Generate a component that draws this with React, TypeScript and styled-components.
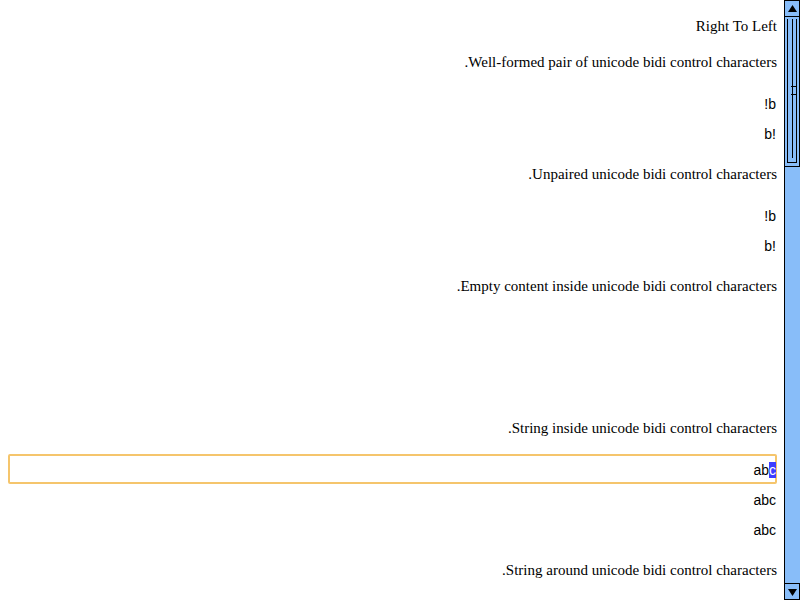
import styled, { createGlobalStyle } from 'styled-components';

const GlobalStyle = createGlobalStyle`
  html, body {
    margin: 0;
    padding: 0;
    height: 100%;
    overflow: hidden;
    background: #fff;
  }
`;

const Page = styled.div`
  display: flex;
  width: 800px;
  height: 600px;
`;

const Content = styled.main`
  flex: 1;
  padding: 18px 7px 0 8px;
  direction: rtl;
  font-family: 'Liberation Serif', 'Times New Roman', serif;
  font-size: 15px;
  color: #000;
  overflow: hidden;
`;

const Title = styled.div`
  line-height: 17px;
  margin-bottom: 19px;
`;

const Caption = styled.p`
  margin: 0 0 17px;
  line-height: 17px;
`;

const Fields = styled.div`
  display: flex;
  flex-direction: column;
  margin-bottom: 18px;
`;

const Field = styled.div<{ $focused?: boolean; $ltr?: boolean }>`
  box-sizing: border-box;
  height: 30px;
  display: flex;
  align-items: center;
  padding: 2px 0 0;
  border: 2px solid ${p => (p.$focused ? '#f5c56c' : 'transparent')};
  border-radius: 2px;
  font-family: 'Liberation Sans', Arial, sans-serif;
  font-size: 14px;
  unicode-bidi: ${p => (p.$ltr ? 'isolate-override' : 'normal')};
  direction: ${p => (p.$ltr ? 'ltr' : 'rtl')};
  justify-content: ${p => (p.$ltr ? 'flex-end' : 'flex-start')};
`;

const FieldText = styled.span`
  margin: 0 -1px;
`;

const Selected = styled.span`
  background: #3d3dff;
  color: #fff;
`;

const Scrollbar = styled.div`
  width: 16px;
  height: 600px;
  display: flex;
  flex-direction: column;
  background: #88bdf9;
`;

const ArrowButton = styled.div`
  box-sizing: border-box;
  height: 17px;
  border: 1px solid #000;
  background: #88bdf9;
  display: flex;
  align-items: center;
  justify-content: center;
`;

const Thumb = styled.div`
  box-sizing: border-box;
  height: 150px;
  border: 1px solid #000;
  border-top: none;
  padding: 2px 2px 3px;
  display: flex;
`;

const ThumbInner = styled.div`
  flex: 1;
  border: 1px solid #000;
  border-top: none;
  display: flex;
  justify-content: center;
  align-items: center;
  position: relative;
`;

const ThumbLine = styled.div`
  width: 1px;
  height: calc(100% - 4px);
  margin-top: -4px;
  background: #000;
`;

const Grip = styled.div<{ $top: number }>`
  position: absolute;
  left: 3px;
  width: 5px;
  height: 1px;
  top: ${p => p.$top}px;
  background: #000;
`;

const Track = styled.div`
  flex: 1;
  box-sizing: border-box;
  border-left: 1px solid #000;
  border-right: 1px solid #88bdf9;
`;

const Triangle = ({ down }: { down?: boolean }) => (
  <svg width="9" height="8" viewBox="0 0 9 8">
    <polygon points={down ? '0,1 9,1 4.5,8' : '4.5,0 9,7 0,7'} fill="#000" />
  </svg>
);

export default function App() {
  return (
    <Page>
      <GlobalStyle />
      <Content>
        <Title>Right To Left</Title>

        <Caption>Well-formed pair of unicode bidi control characters.</Caption>
        <Fields>
          <Field><FieldText>b!</FieldText></Field>
          <Field $ltr><FieldText>b!</FieldText></Field>
        </Fields>

        <Caption>Unpaired unicode bidi control characters.</Caption>
        <Fields>
          <Field><FieldText>b!</FieldText></Field>
          <Field $ltr><FieldText>b!</FieldText></Field>
        </Fields>

        <Caption>Empty content inside unicode bidi control characters.</Caption>
        <Fields>
          <Field />
          <Field />
          <Field />
        </Fields>

        <Caption>String inside unicode bidi control characters.</Caption>
        <Fields>
          <Field $focused $ltr>
            <FieldText>
              ab<Selected>c</Selected>
            </FieldText>
          </Field>
          <Field $ltr><FieldText>abc</FieldText></Field>
          <Field $ltr><FieldText>abc</FieldText></Field>
        </Fields>

        <Caption>String around unicode bidi control characters.</Caption>
      </Content>
      <Scrollbar>
        <ArrowButton>
          <Triangle />
        </ArrowButton>
        <Thumb>
          <ThumbInner>
            <ThumbLine />
            <Grip $top={67} />
            <Grip $top={75} />
          </ThumbInner>
        </Thumb>
        <Track />
        <ArrowButton>
          <Triangle down />
        </ArrowButton>
      </Scrollbar>
    </Page>
  );
}
